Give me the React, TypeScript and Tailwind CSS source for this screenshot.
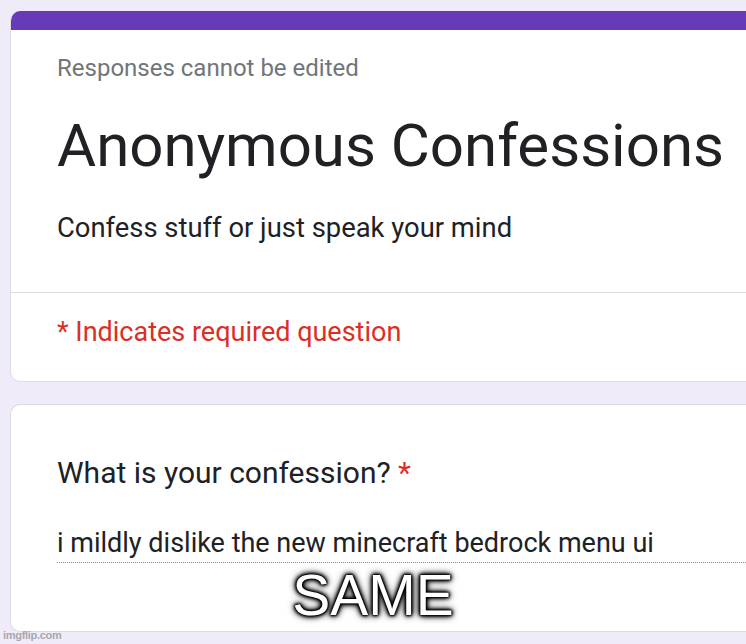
import React from 'react';

const App: React.FC = () => {
  return (
    <div className="relative h-[644px] w-[746px] overflow-hidden bg-[#f0ebf8] font-['Roboto',sans-serif]">
      <div className="flex flex-col gap-[22px] pt-[11px] pl-[10px]">
        {/* Header card */}
        <div className="w-[800px] overflow-hidden rounded-l-[10px] border-b border-l border-[#dadce0] bg-white">
          <div className="h-[19px] bg-[#673ab7]"></div>
          <div className="px-[46px] pt-[22px] pb-[46px]">
            <div className="text-[24px] leading-[32px] text-[#70757a]">Responses cannot be edited</div>
            <h1 className="mt-[26px] text-[60px] leading-[72px] text-[#202124]">Anonymous Confessions</h1>
            <p className="mt-[28px] text-[27.4px] leading-[36px] text-[#202124]">Confess stuff or just speak your mind</p>
          </div>
          <div className="border-t border-[#dadce0] px-[46px] pt-[21px] pb-[31px]">
            <div className="text-[27px] leading-[36px] text-[#d93025]">* Indicates required question</div>
          </div>
        </div>

        {/* Question card */}
        <div className="h-[228px] w-[800px] rounded-l-[10px] border-y border-l border-[#dadce0] bg-white px-[46px] pt-[48px]">
          <div className="text-[30px] leading-[40px] text-[#202124]">
            What is your confession? <span className="text-[#d93025]">*</span>
          </div>
          <div className="mt-[32px] border-b border-dotted border-[#8a8a8a] pb-[1px] text-[27px] leading-[36px] text-[#202124]">
            i mildly dislike the new minecraft bedrock menu ui
          </div>
        </div>
      </div>

      {/* Meme caption */}
      <div className="absolute left-0 top-[567px] w-[746px] text-center font-['Liberation_Sans',Arial,sans-serif] text-[57px] leading-[57px] text-white [text-shadow:0_0_2px_#000,0_0_2px_#000,0_0_2px_#000,0_0_4px_#000,0_0_4px_#000,0_0_6px_#000,0_0_8px_#333]">
        SAME
      </div>

      {/* Watermark */}
      <div className="absolute left-[3px] top-[628px] font-['Liberation_Sans',Arial,sans-serif] text-[11px] font-bold leading-[14px] tracking-[-0.3px] text-[#a8a8ad]">
        imgflip.com
      </div>
    </div>
  );
};

export default App;
